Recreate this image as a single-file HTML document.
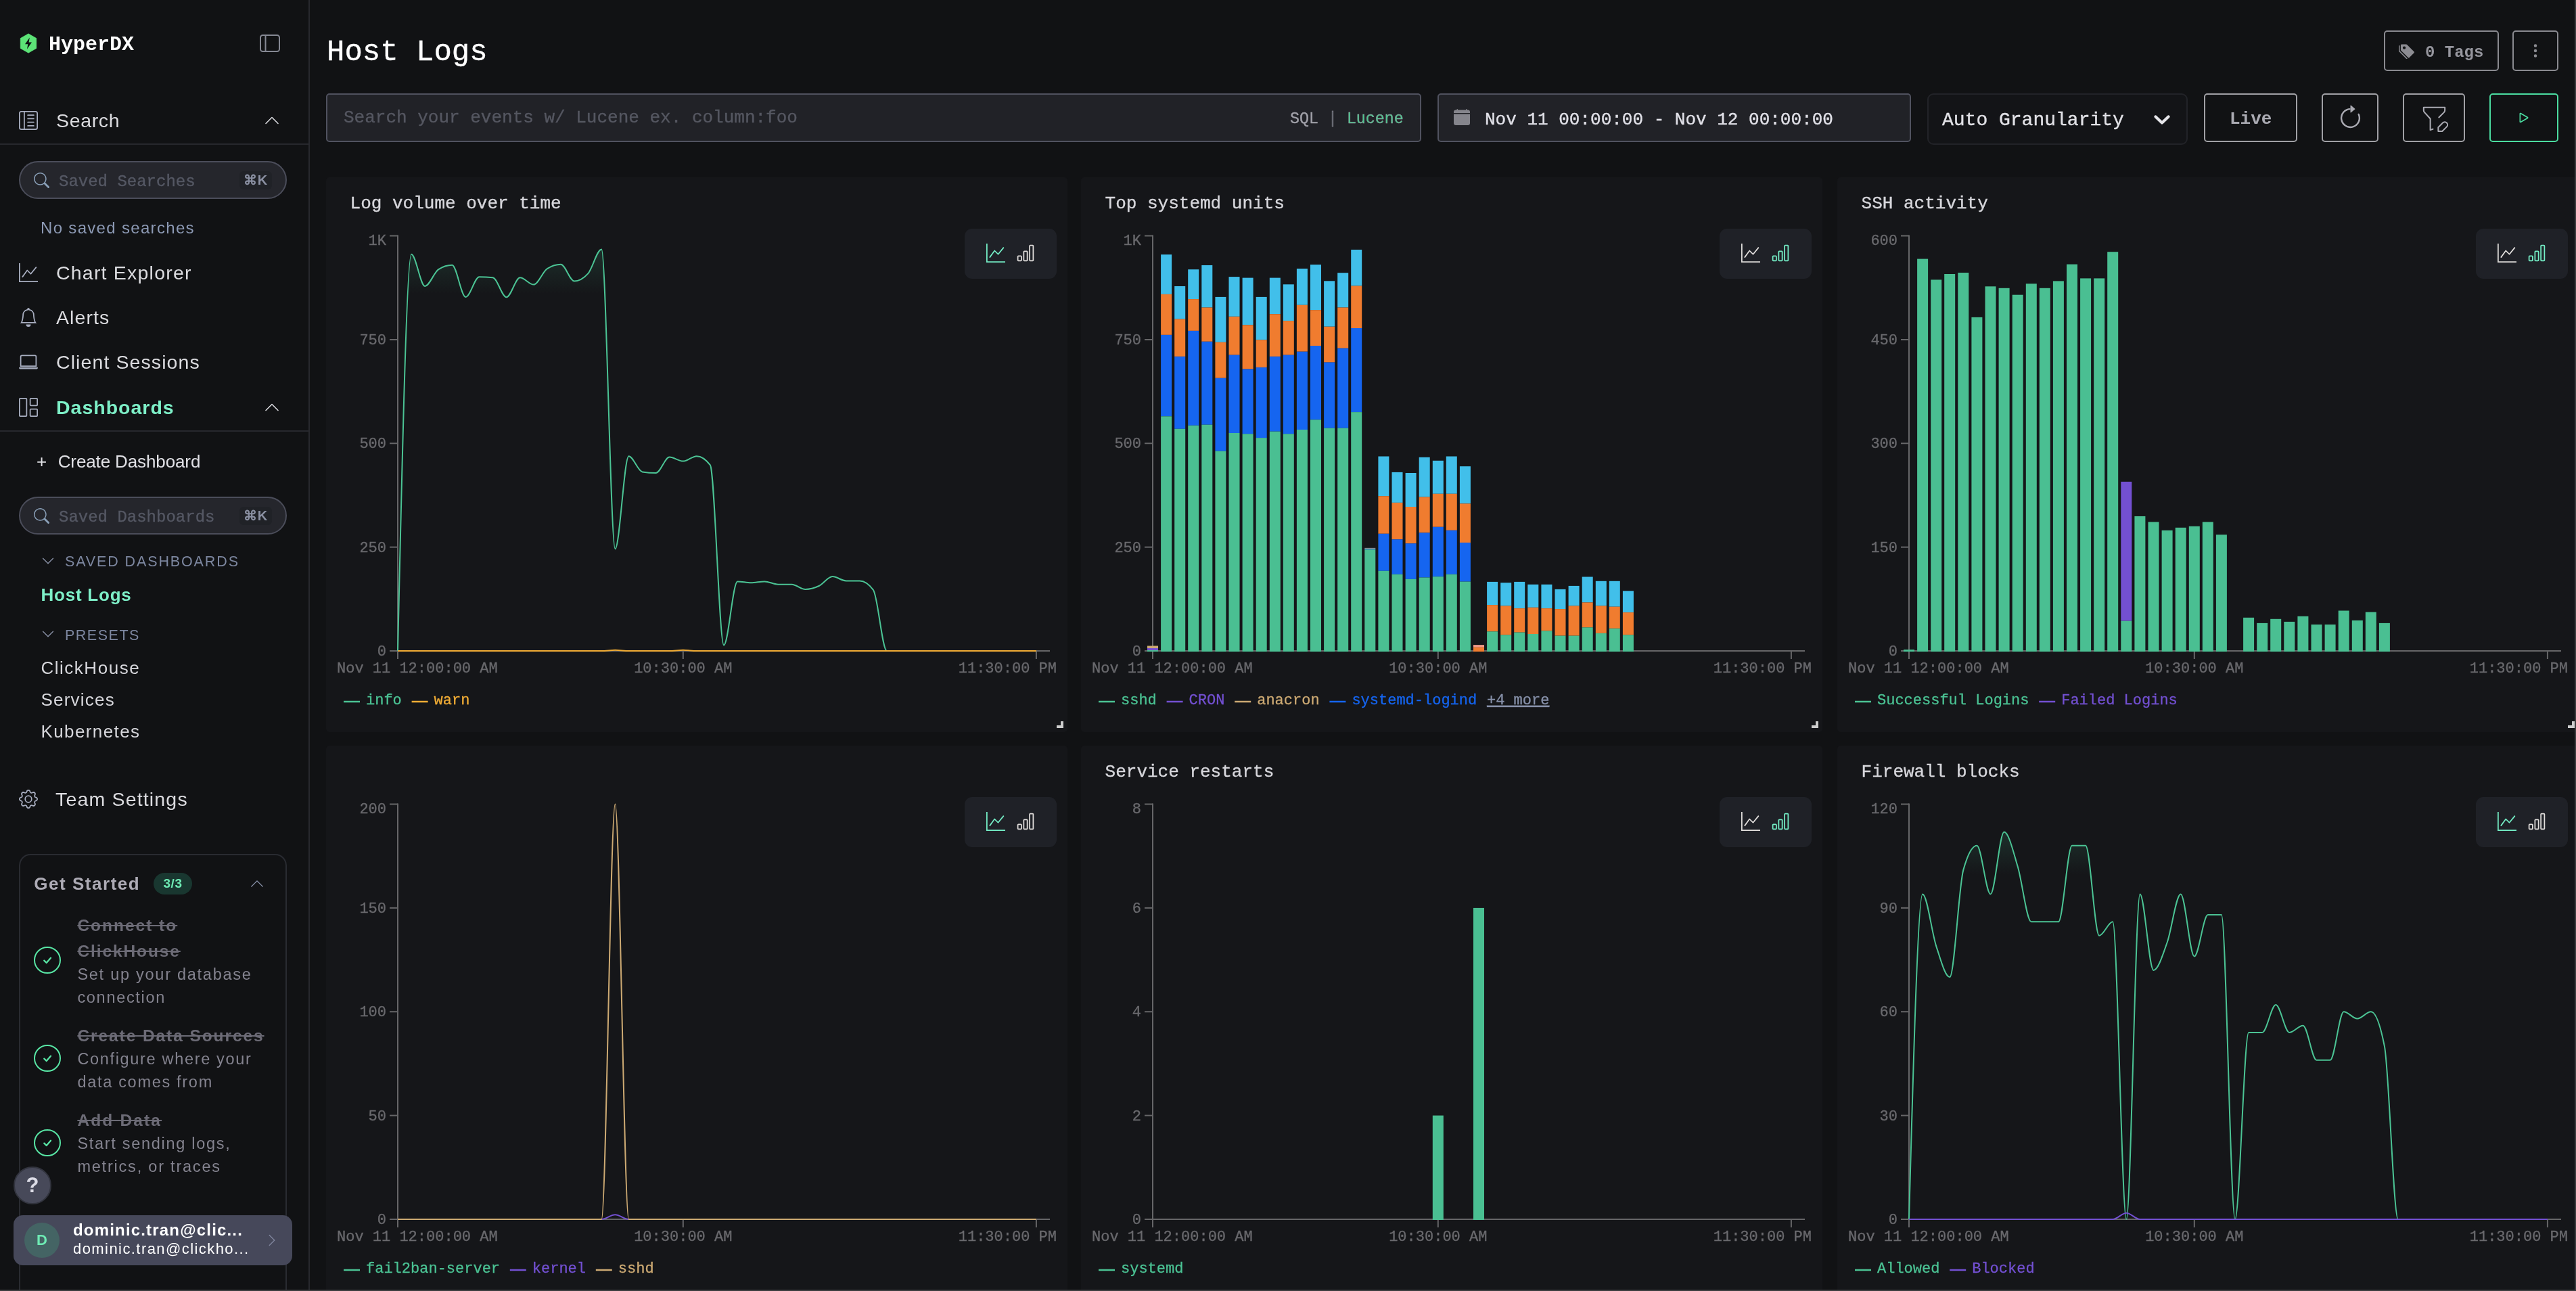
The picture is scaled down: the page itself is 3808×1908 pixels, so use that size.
<!DOCTYPE html>
<html lang="en"><head><meta charset="utf-8"><title>Host Logs - HyperDX</title>
<style>
*{box-sizing:border-box}
html,body{margin:0;padding:0}
body{width:3808px;height:1908px;overflow:hidden;background:#111214;position:relative;font-family:"Liberation Mono", monospace;color:#e1e1e6}
.t{position:absolute;white-space:nowrap}
.ic{position:absolute;display:block;overflow:visible}
.sb{position:absolute;left:0;top:0;width:458px;height:1908px;background:#111214;border-right:2px solid #27282d;font-family:"Liberation Sans", sans-serif}
.hr{position:absolute;left:0;width:456px;height:2px;background:#27282d}
.pill{position:absolute;left:28px;width:396px;height:56px;border:2px solid #4b4d5a;border-radius:28px;background:#25262c}
.kbd{position:absolute;left:324px;top:13px;width:48px;height:27px;border-radius:6px;background:#202227;color:#8a90a2;font:bold 20px/27px "Liberation Sans", sans-serif;text-align:center;letter-spacing:1px}
.card{position:absolute;background:#151619;border-radius:5px;overflow:hidden}
.cs{position:absolute;left:0;top:0}
.tk{font:22px "Liberation Mono", monospace;fill:#69696d;stroke:#69696d;stroke-width:.35px}
.lg{font:22px "Liberation Mono", monospace;stroke-width:.3px}
.tg{position:absolute;right:16px;top:76px;width:136px;height:74px;border-radius:11px;background:#1f2127}
.rh{position:absolute;right:6px;bottom:6px;width:10px;height:10px;border-right:4px solid #cdcdcd;border-bottom:4px solid #cdcdcd}
.btn{position:absolute;border:2px solid #8a8a90;border-radius:5px}
</style></head><body>
<div id="app" style="position:absolute;left:0;top:0;width:3808px;height:1908px;will-change:transform">

<div class="t" style="left:483px;top:49.2px;font:normal 44px/57px 'Liberation Mono', monospace;color:#fff;-webkit-text-stroke:.35px #fff;">Host Logs</div>
<div class="btn" style="left:3524px;top:45px;width:170px;height:60px"></div>
<svg class="ic" style="left:3545.5px;top:63.5px" width="23.5" height="23.5" viewBox="0 0 16 16" fill="#8c8c92" ><path d="M2 2a1 1 0 0 1 1-1h4.586a1 1 0 0 1 .707.293l7 7a1 1 0 0 1 0 1.414l-4.586 4.586a1 1 0 0 1-1.414 0l-7-7A1 1 0 0 1 2 6.586V2zm3.500 4a1.500 1.500 0 1 0 0-3 1.500 1.500 0 0 0 0 3z"/><path d="M1.293 7.793A1 1 0 0 1 1 7.086V2a1 1 0 0 0-1 1v4.586a1 1 0 0 0 .293.707l7 7a1 1 0 0 0 1.414 0l.043-.043-7.457-7.457z"/></svg>
<div class="t" style="left:3585px;top:61.9px;font:bold 24px/31px 'Liberation Mono', monospace;color:#96969e;">0 Tags</div>
<div class="btn" style="left:3714px;top:45px;width:68px;height:60px"></div>
<svg class="ic" style="left:3736px;top:63px" width="24" height="24" viewBox="0 0 16 16" fill="#8c8c92" ><path d="M9.500 13a1.500 1.500 0 1 1-3 0 1.500 1.500 0 0 1 3 0zm0-5a1.500 1.500 0 1 1-3 0 1.500 1.500 0 0 1 3 0zm0-5a1.500 1.500 0 1 1-3 0 1.500 1.500 0 0 1 3 0z"/></svg>
<div style="position:absolute;left:482px;top:138px;width:1619px;height:72px;border:2px solid #50525f;border-radius:5px;background:#212227"></div>
<div class="t" style="left:508px;top:157.3px;font:normal 26px/34px 'Liberation Mono', monospace;color:#555761;-webkit-text-stroke:.35px #555761;">Search your events w/ Lucene ex. column:foo</div>
<div class="t" style="left:1907px;top:161.4px;font:normal 23.3px/30px 'Liberation Mono', monospace;color:#a0a0a8;-webkit-text-stroke:.35px #a0a0a8;">SQL <span style="color:#5a5c66">|</span> <span style="color:#4bc88f">Lucene</span></div>
<div style="position:absolute;left:2125px;top:138px;width:700px;height:72px;border:2px solid #50525f;border-radius:5px;background:#212227"></div>
<svg class="ic" style="left:2148.8px;top:161px" width="24" height="24" viewBox="0 0 16 16" fill="#85858c" ><path d="M3.500 0a.5.5 0 0 1 .5.5V1h8V.5a.5.5 0 0 1 1 0V1h1a2 2 0 0 1 2 2v11a2 2 0 0 1-2 2H2a2 2 0 0 1-2-2V5h16V4H0V3a2 2 0 0 1 2-2h1V.5a.5.5 0 0 1 .5-.5z"/></svg>
<div class="t" style="left:2195px;top:159.7px;font:normal 26px/34px 'Liberation Mono', monospace;color:#e1e1e8;-webkit-text-stroke:.35px #e1e1e8;">Nov 11 00:00:00 - Nov 12 00:00:00</div>
<div style="position:absolute;left:2849px;top:138px;width:385px;height:76px;border:2px solid #222328;border-radius:9px;background:#131417"></div>
<div class="t" style="left:2871px;top:160.2px;font:normal 28px/36px 'Liberation Mono', monospace;color:#e1e1e6;-webkit-text-stroke:.35px #e1e1e6;">Auto Granularity</div>
<svg class="ic" style="left:3182px;top:167px" width="28" height="20" viewBox="0 0 28 20"><path d="M4.500 5.500 L14 14.500 L23.500 5.500" fill="none" stroke="#e6e6ea" stroke-width="4.300" stroke-linecap="round" stroke-linejoin="round"/></svg>
<div class="btn" style="left:3258px;top:138px;width:138px;height:72px;border-color:#a0a0a5"></div>
<div class="t" style="left:3296px;top:159.4px;font:bold 26px/34px 'Liberation Mono', monospace;color:#aaaab2;">Live</div>
<div class="btn" style="left:3432px;top:138px;width:84px;height:72px;border-color:#a0a0a5"></div>
<svg class="ic" style="left:3454.5px;top:154.5px" width="39" height="39" viewBox="0 0 16 16" fill="#aaaab2" ><path fill-rule="evenodd" d="M8 3a5 5 0 1 0 4.546 2.914.5.5 0 0 1 .908-.417A6 6 0 1 1 8 2v1z"/><path d="M8 4.466V.534a.25.25 0 0 1 .41-.192l2.360 1.966c.12.1.12.284 0 .384L8.410 4.658A.25.25 0 0 1 8 4.466z"/></svg>
<div class="btn" style="left:3552px;top:138px;width:92px;height:72px;border-color:#a0a0a5"></div>
<svg class="ic" style="left:3574.5px;top:151px" width="47" height="47" viewBox="0 0 24 24" fill="none" stroke="#aaaab2" stroke-width="1.050" stroke-linecap="round" stroke-linejoin="round"><path d="M10.970 20.344l-1.970 .656v-8.500l-4.480 -4.928a2 2 0 0 1 -.520 -1.345v-2.227h16v2.172a2 2 0 0 1 -.586 1.414l-3.914 3.914"/><path d="M18.420 15.610a2.100 2.100 0 0 1 2.970 2.970l-3.390 3.420h-3v-3l3.420 -3.390z"/></svg>
<div class="btn" style="left:3680px;top:138px;width:102px;height:72px;border-color:#4bdca0"></div>
<svg class="ic" style="left:3717.8px;top:161px" width="26" height="26" viewBox="0 0 16 16" fill="#4bdca0" ><path d="M10.804 8 5 4.633v6.734L10.804 8zm.792-.696a.802.802 0 0 1 0 1.392l-6.363 3.692C4.713 12.690 4 12.345 4 11.692V4.308c0-.653.713-.998 1.233-.696l6.363 3.692z"/></svg>
<div class="card" style="left:482px;top:262px;width:1096px;height:820px"><div class="t" style="left:35.6px;top:22.3px;font:normal 26px/34px 'Liberation Mono', monospace;color:#d7d7dc;-webkit-text-stroke:.35px #d7d7dc;">Log volume over time</div><svg class="cs" width="1116" height="820" viewBox="482 262 1116 820"><defs><linearGradient id="g1" x1="0" y1="0" x2="0" y2="1"><stop offset="0" stop-color="#4bc394" stop-opacity=".15"/><stop offset=".11" stop-color="#4bc394" stop-opacity="0"/></linearGradient></defs><path d="M588,347.5 V974" stroke="#666668" stroke-width="2" fill="none"/><path d="M576,962 H1552" stroke="#666668" stroke-width="2" fill="none"/><text x="571" y="969" text-anchor="end" class="tk">0</text><path d="M576,808.625 H588" stroke="#666668" stroke-width="2"/><text x="571" y="815.625" text-anchor="end" class="tk">250</text><path d="M576,655.25 H588" stroke="#666668" stroke-width="2"/><text x="571" y="662.25" text-anchor="end" class="tk">500</text><path d="M576,501.875 H588" stroke="#666668" stroke-width="2"/><text x="571" y="508.875" text-anchor="end" class="tk">750</text><path d="M576,348.5 H588" stroke="#666668" stroke-width="2"/><text x="571" y="362" text-anchor="end" class="tk">1K</text><path d="M1009.8,962 V974" stroke="#666668" stroke-width="2"/><path d="M1531.9,962 V974" stroke="#666668" stroke-width="2"/><text x="498" y="993.5" class="tk">Nov 11 12:00:00 AM</text><text x="1009.8" y="993.5" text-anchor="middle" class="tk">10:30:00 AM</text><text x="1562" y="993.5" text-anchor="end" class="tk">11:30:00 PM</text><path d="M588.00,962.00C594.69,668.85,601.39,375.70,608.08,375.70C614.78,375.70,621.47,422.90,628.17,422.90C634.86,422.90,641.56,402.30,648.25,398.10C654.94,393.90,661.64,391.80,668.33,391.80C675.03,391.80,681.72,439.00,688.42,439.00C695.11,439.00,701.81,409.20,708.50,409.20C715.19,409.20,721.89,409.57,728.58,410.30C735.28,411.03,741.97,439.20,748.67,439.20C755.36,439.20,762.06,410.30,768.75,410.30C775.44,410.30,782.14,420.60,788.83,420.60C795.53,420.60,802.22,401.30,808.92,397.10C815.61,392.90,822.31,390.80,829.00,390.80C835.69,390.80,842.39,415.50,849.08,415.50C855.78,415.50,862.47,411.80,869.17,404.40C875.86,397.00,882.56,368.40,889.25,368.40C895.94,368.40,902.64,811.20,909.33,811.20C916.03,811.20,922.72,674.20,929.42,674.20C936.11,674.20,942.81,696.33,949.50,697.40C956.19,698.47,962.89,699.00,969.58,699.00C976.28,699.00,982.97,675.60,989.67,675.60C996.36,675.60,1003.06,681.60,1009.75,681.60C1016.44,681.60,1023.14,674.20,1029.83,674.20C1036.53,674.20,1043.22,678.60,1049.92,687.40C1056.61,696.20,1063.31,953.50,1070.00,953.50C1076.69,953.50,1083.39,859.40,1090.08,859.40C1096.78,859.40,1103.47,861.30,1110.17,861.30C1116.86,861.30,1123.56,859.40,1130.25,859.40C1136.94,859.40,1143.64,863.70,1150.33,863.70C1157.03,863.70,1163.72,863.70,1170.42,863.70C1177.11,863.70,1183.81,871.00,1190.50,871.00C1197.19,871.00,1203.89,869.15,1210.58,866.00C1217.28,862.85,1223.97,852.10,1230.67,852.10C1237.36,852.10,1244.06,858.40,1250.75,858.40C1257.44,858.40,1264.14,858.40,1270.83,858.40C1277.53,858.40,1284.22,862.87,1290.92,871.80C1297.61,880.73,1304.31,962.00,1311.00,962.00C1317.69,962.00,1324.39,962.00,1331.08,962.00C1337.78,962.00,1344.47,962.00,1351.17,962.00C1357.86,962.00,1364.56,962.00,1371.25,962.00C1377.94,962.00,1384.64,962.00,1391.33,962.00C1398.03,962.00,1404.72,962.00,1411.42,962.00C1418.11,962.00,1424.81,962.00,1431.50,962.00C1438.19,962.00,1444.89,962.00,1451.58,962.00C1458.28,962.00,1464.97,962.00,1471.67,962.00C1478.36,962.00,1485.06,962.00,1491.75,962.00C1498.44,962.00,1505.14,962.00,1511.83,962.00C1518.53,962.00,1525.22,962.00,1531.92,962.00L1531.92,962L588.00,962Z" fill="url(#g1)" stroke="none"/><path d="M588.00,962.00C594.69,668.85,601.39,375.70,608.08,375.70C614.78,375.70,621.47,422.90,628.17,422.90C634.86,422.90,641.56,402.30,648.25,398.10C654.94,393.90,661.64,391.80,668.33,391.80C675.03,391.80,681.72,439.00,688.42,439.00C695.11,439.00,701.81,409.20,708.50,409.20C715.19,409.20,721.89,409.57,728.58,410.30C735.28,411.03,741.97,439.20,748.67,439.20C755.36,439.20,762.06,410.30,768.75,410.30C775.44,410.30,782.14,420.60,788.83,420.60C795.53,420.60,802.22,401.30,808.92,397.10C815.61,392.90,822.31,390.80,829.00,390.80C835.69,390.80,842.39,415.50,849.08,415.50C855.78,415.50,862.47,411.80,869.17,404.40C875.86,397.00,882.56,368.40,889.25,368.40C895.94,368.40,902.64,811.20,909.33,811.20C916.03,811.20,922.72,674.20,929.42,674.20C936.11,674.20,942.81,696.33,949.50,697.40C956.19,698.47,962.89,699.00,969.58,699.00C976.28,699.00,982.97,675.60,989.67,675.60C996.36,675.60,1003.06,681.60,1009.75,681.60C1016.44,681.60,1023.14,674.20,1029.83,674.20C1036.53,674.20,1043.22,678.60,1049.92,687.40C1056.61,696.20,1063.31,953.50,1070.00,953.50C1076.69,953.50,1083.39,859.40,1090.08,859.40C1096.78,859.40,1103.47,861.30,1110.17,861.30C1116.86,861.30,1123.56,859.40,1130.25,859.40C1136.94,859.40,1143.64,863.70,1150.33,863.70C1157.03,863.70,1163.72,863.70,1170.42,863.70C1177.11,863.70,1183.81,871.00,1190.50,871.00C1197.19,871.00,1203.89,869.15,1210.58,866.00C1217.28,862.85,1223.97,852.10,1230.67,852.10C1237.36,852.10,1244.06,858.40,1250.75,858.40C1257.44,858.40,1264.14,858.40,1270.83,858.40C1277.53,858.40,1284.22,862.87,1290.92,871.80C1297.61,880.73,1304.31,962.00,1311.00,962.00C1317.69,962.00,1324.39,962.00,1331.08,962.00C1337.78,962.00,1344.47,962.00,1351.17,962.00C1357.86,962.00,1364.56,962.00,1371.25,962.00C1377.94,962.00,1384.64,962.00,1391.33,962.00C1398.03,962.00,1404.72,962.00,1411.42,962.00C1418.11,962.00,1424.81,962.00,1431.50,962.00C1438.19,962.00,1444.89,962.00,1451.58,962.00C1458.28,962.00,1464.97,962.00,1471.67,962.00C1478.36,962.00,1485.06,962.00,1491.75,962.00C1498.44,962.00,1505.14,962.00,1511.83,962.00C1518.53,962.00,1525.22,962.00,1531.92,962.00" fill="none" stroke="#4bc394" stroke-width="2"/><path d="M588.00,962.00C594.69,962.00,601.39,962.00,608.08,962.00C614.78,962.00,621.47,962.00,628.17,962.00C634.86,962.00,641.56,962.00,648.25,962.00C654.94,962.00,661.64,962.00,668.33,962.00C675.03,962.00,681.72,962.00,688.42,962.00C695.11,962.00,701.81,962.00,708.50,962.00C715.19,962.00,721.89,962.00,728.58,962.00C735.28,962.00,741.97,962.00,748.67,962.00C755.36,962.00,762.06,962.00,768.75,962.00C775.44,962.00,782.14,962.00,788.83,962.00C795.53,962.00,802.22,962.00,808.92,962.00C815.61,962.00,822.31,962.00,829.00,962.00C835.69,962.00,842.39,962.00,849.08,962.00C855.78,962.00,862.47,962.00,869.17,962.00C875.86,962.00,882.56,962.00,889.25,962.00C895.94,962.00,902.64,960.80,909.33,960.80C916.03,960.80,922.72,962.00,929.42,962.00C936.11,962.00,942.81,962.00,949.50,962.00C956.19,962.00,962.89,962.00,969.58,962.00C976.28,962.00,982.97,962.00,989.67,962.00C996.36,962.00,1003.06,960.80,1009.75,960.80C1016.44,960.80,1023.14,962.00,1029.83,962.00C1036.53,962.00,1043.22,962.00,1049.92,962.00C1056.61,962.00,1063.31,962.00,1070.00,962.00C1076.69,962.00,1083.39,962.00,1090.08,962.00C1096.78,962.00,1103.47,962.00,1110.17,962.00C1116.86,962.00,1123.56,962.00,1130.25,962.00C1136.94,962.00,1143.64,962.00,1150.33,962.00C1157.03,962.00,1163.72,962.00,1170.42,962.00C1177.11,962.00,1183.81,962.00,1190.50,962.00C1197.19,962.00,1203.89,962.00,1210.58,962.00C1217.28,962.00,1223.97,962.00,1230.67,962.00C1237.36,962.00,1244.06,962.00,1250.75,962.00C1257.44,962.00,1264.14,962.00,1270.83,962.00C1277.53,962.00,1284.22,962.00,1290.92,962.00C1297.61,962.00,1304.31,962.00,1311.00,962.00C1317.69,962.00,1324.39,962.00,1331.08,962.00C1337.78,962.00,1344.47,962.00,1351.17,962.00C1357.86,962.00,1364.56,962.00,1371.25,962.00C1377.94,962.00,1384.64,962.00,1391.33,962.00C1398.03,962.00,1404.72,962.00,1411.42,962.00C1418.11,962.00,1424.81,962.00,1431.50,962.00C1438.19,962.00,1444.89,962.00,1451.58,962.00C1458.28,962.00,1464.97,962.00,1471.67,962.00C1478.36,962.00,1485.06,962.00,1491.75,962.00C1498.44,962.00,1505.14,962.00,1511.83,962.00C1518.53,962.00,1525.22,962.00,1531.92,962.00" fill="none" stroke="#f2ad35" stroke-width="2"/><path d="M508,1037 h24" stroke="#4bc394" stroke-width="2.5"/><text x="541" y="1040.8" class="lg" fill="#4bc394" stroke="#4bc394">info</text><path d="M608.6,1037 h24" stroke="#f2ad35" stroke-width="2.5"/><text x="641.6" y="1040.8" class="lg" fill="#f2ad35" stroke="#f2ad35">warn</text></svg><div class="tg"><svg class="ic" style="left:32px;top:22px" width="28" height="28" viewBox="0 0 16 16" fill="#74eec6" ><path fill-rule="evenodd" d="M0 0h1v15h15v1H0V0Zm14.817 3.113a.5.5 0 0 1 .07.704l-4.5 5.5a.5.5 0 0 1-.74.037L7.06 6.767l-3.656 5.027a.5.5 0 0 1-.808-.588l4-5.5a.5.5 0 0 1 .758-.06l2.609 2.61 4.15-5.073a.5.5 0 0 1 .704-.07Z"/></svg><svg class="ic" style="left:76px;top:22px" width="28" height="28" viewBox="0 0 16 16" fill="#e1dedc" ><path d="M4 11H2v3h2v-3zm5-4H7v7h2V7zm5-5v12h-2V2h2zm-2-1a1 1 0 0 0-1 1v12a1 1 0 0 0 1 1h2a1 1 0 0 0 1-1V2a1 1 0 0 0-1-1h-2zM6 7a1 1 0 0 1 1-1h2a1 1 0 0 1 1 1v7a1 1 0 0 1-1 1H7a1 1 0 0 1-1-1V7zm-5 4a1 1 0 0 1 1-1h2a1 1 0 0 1 1 1v3a1 1 0 0 1-1 1H2a1 1 0 0 1-1-1v-3z"/></svg></div><div class="rh"></div></div>
<div class="card" style="left:1598px;top:262px;width:1096px;height:820px"><div class="t" style="left:35.6px;top:22.3px;font:normal 26px/34px 'Liberation Mono', monospace;color:#d7d7dc;-webkit-text-stroke:.35px #d7d7dc;">Top systemd units</div><svg class="cs" width="1116" height="820" viewBox="1598 262 1116 820"><path d="M1704,347.5 V974" stroke="#666668" stroke-width="2" fill="none"/><path d="M1692,962 H2668" stroke="#666668" stroke-width="2" fill="none"/><text x="1687" y="969" text-anchor="end" class="tk">0</text><path d="M1692,808.625 H1704" stroke="#666668" stroke-width="2"/><text x="1687" y="815.625" text-anchor="end" class="tk">250</text><path d="M1692,655.25 H1704" stroke="#666668" stroke-width="2"/><text x="1687" y="662.25" text-anchor="end" class="tk">500</text><path d="M1692,501.875 H1704" stroke="#666668" stroke-width="2"/><text x="1687" y="508.875" text-anchor="end" class="tk">750</text><path d="M1692,348.5 H1704" stroke="#666668" stroke-width="2"/><text x="1687" y="362" text-anchor="end" class="tk">1K</text><path d="M2125.8,962 V974" stroke="#666668" stroke-width="2"/><path d="M2647.9,962 V974" stroke="#666668" stroke-width="2"/><text x="1614" y="993.5" class="tk">Nov 11 12:00:00 AM</text><text x="2125.8" y="993.5" text-anchor="middle" class="tk">10:30:00 AM</text><text x="2678" y="993.5" text-anchor="end" class="tk">11:30:00 PM</text><rect x="1696.0" y="954.5" width="16" height="3.5" fill="#cdaa73"/><rect x="1696.0" y="958.0" width="16" height="3.0" fill="#7350d2"/><rect x="1696.0" y="961.0" width="16" height="2.0" fill="#4abf92"/><rect x="1716.1" y="376.2" width="16" height="58.7" fill="#41bfea"/><rect x="1716.1" y="434.9" width="16" height="60.0" fill="#f07c2f"/><rect x="1716.1" y="494.9" width="16" height="120.4" fill="#1565f0"/><rect x="1716.1" y="615.3" width="16" height="347.7" fill="#4abf92"/><rect x="1736.2" y="423.0" width="16" height="48.6" fill="#41bfea"/><rect x="1736.2" y="471.6" width="16" height="55.3" fill="#f07c2f"/><rect x="1736.2" y="526.9" width="16" height="106.9" fill="#1565f0"/><rect x="1736.2" y="633.8" width="16" height="329.2" fill="#4abf92"/><rect x="1756.2" y="398.2" width="16" height="43.9" fill="#41bfea"/><rect x="1756.2" y="442.1" width="16" height="46.8" fill="#f07c2f"/><rect x="1756.2" y="488.9" width="16" height="139.9" fill="#1565f0"/><rect x="1756.2" y="628.8" width="16" height="334.2" fill="#4abf92"/><rect x="1776.3" y="392.0" width="16" height="62.5" fill="#41bfea"/><rect x="1776.3" y="454.5" width="16" height="50.3" fill="#f07c2f"/><rect x="1776.3" y="504.8" width="16" height="122.9" fill="#1565f0"/><rect x="1776.3" y="627.7" width="16" height="335.3" fill="#4abf92"/><rect x="1796.4" y="438.9" width="16" height="66.9" fill="#41bfea"/><rect x="1796.4" y="505.8" width="16" height="53.0" fill="#f07c2f"/><rect x="1796.4" y="558.8" width="16" height="108.0" fill="#1565f0"/><rect x="1796.4" y="666.8" width="16" height="296.2" fill="#4abf92"/><rect x="1816.5" y="409.1" width="16" height="58.7" fill="#41bfea"/><rect x="1816.5" y="467.9" width="16" height="56.8" fill="#f07c2f"/><rect x="1816.5" y="524.6" width="16" height="115.4" fill="#1565f0"/><rect x="1816.5" y="640.0" width="16" height="323.0" fill="#4abf92"/><rect x="1836.6" y="410.6" width="16" height="69.6" fill="#41bfea"/><rect x="1836.6" y="480.3" width="16" height="65.2" fill="#f07c2f"/><rect x="1836.6" y="545.5" width="16" height="95.7" fill="#1565f0"/><rect x="1836.6" y="641.2" width="16" height="321.8" fill="#4abf92"/><rect x="1856.7" y="438.9" width="16" height="63.4" fill="#41bfea"/><rect x="1856.7" y="502.3" width="16" height="40.6" fill="#f07c2f"/><rect x="1856.7" y="543.0" width="16" height="104.1" fill="#1565f0"/><rect x="1856.7" y="647.1" width="16" height="315.9" fill="#4abf92"/><rect x="1876.8" y="410.6" width="16" height="53.5" fill="#41bfea"/><rect x="1876.8" y="464.2" width="16" height="62.7" fill="#f07c2f"/><rect x="1876.8" y="526.9" width="16" height="110.8" fill="#1565f0"/><rect x="1876.8" y="637.7" width="16" height="325.3" fill="#4abf92"/><rect x="1896.8" y="420.3" width="16" height="53.8" fill="#41bfea"/><rect x="1896.8" y="474.1" width="16" height="50.6" fill="#f07c2f"/><rect x="1896.8" y="524.6" width="16" height="116.6" fill="#1565f0"/><rect x="1896.8" y="641.2" width="16" height="321.8" fill="#4abf92"/><rect x="1916.9" y="397.0" width="16" height="53.8" fill="#41bfea"/><rect x="1916.9" y="450.8" width="16" height="68.9" fill="#f07c2f"/><rect x="1916.9" y="519.7" width="16" height="115.3" fill="#1565f0"/><rect x="1916.9" y="635.0" width="16" height="328.0" fill="#4abf92"/><rect x="1937.0" y="391.1" width="16" height="67.2" fill="#41bfea"/><rect x="1937.0" y="458.2" width="16" height="52.8" fill="#f07c2f"/><rect x="1937.0" y="511.0" width="16" height="109.3" fill="#1565f0"/><rect x="1937.0" y="620.3" width="16" height="342.7" fill="#4abf92"/><rect x="1957.1" y="415.3" width="16" height="67.4" fill="#41bfea"/><rect x="1957.1" y="482.8" width="16" height="52.8" fill="#f07c2f"/><rect x="1957.1" y="535.5" width="16" height="97.2" fill="#1565f0"/><rect x="1957.1" y="632.7" width="16" height="330.3" fill="#4abf92"/><rect x="1977.2" y="403.2" width="16" height="51.3" fill="#41bfea"/><rect x="1977.2" y="454.5" width="16" height="60.2" fill="#f07c2f"/><rect x="1977.2" y="514.7" width="16" height="118.0" fill="#1565f0"/><rect x="1977.2" y="632.7" width="16" height="330.3" fill="#4abf92"/><rect x="1997.2" y="369.0" width="16" height="53.5" fill="#41bfea"/><rect x="1997.2" y="422.5" width="16" height="62.5" fill="#f07c2f"/><rect x="1997.2" y="485.0" width="16" height="124.1" fill="#1565f0"/><rect x="1997.2" y="609.1" width="16" height="353.9" fill="#4abf92"/><rect x="2017.3" y="809.8" width="16" height="1.6" fill="#848c94"/><rect x="2017.3" y="811.4" width="16" height="1.3" fill="#41bfea"/><rect x="2017.3" y="812.7" width="16" height="150.3" fill="#4abf92"/><rect x="2037.4" y="674.5" width="16" height="58.7" fill="#41bfea"/><rect x="2037.4" y="733.2" width="16" height="55.6" fill="#f07c2f"/><rect x="2037.4" y="788.8" width="16" height="55.0" fill="#1565f0"/><rect x="2037.4" y="843.8" width="16" height="119.2" fill="#4abf92"/><rect x="2057.5" y="697.9" width="16" height="45.0" fill="#41bfea"/><rect x="2057.5" y="742.9" width="16" height="54.2" fill="#f07c2f"/><rect x="2057.5" y="797.2" width="16" height="51.6" fill="#1565f0"/><rect x="2057.5" y="848.8" width="16" height="114.2" fill="#4abf92"/><rect x="2077.6" y="699.0" width="16" height="50.0" fill="#41bfea"/><rect x="2077.6" y="749.0" width="16" height="54.2" fill="#f07c2f"/><rect x="2077.6" y="803.2" width="16" height="52.7" fill="#1565f0"/><rect x="2077.6" y="855.9" width="16" height="107.1" fill="#4abf92"/><rect x="2097.7" y="675.8" width="16" height="58.7" fill="#41bfea"/><rect x="2097.7" y="734.5" width="16" height="52.9" fill="#f07c2f"/><rect x="2097.7" y="787.4" width="16" height="66.1" fill="#1565f0"/><rect x="2097.7" y="853.5" width="16" height="109.5" fill="#4abf92"/><rect x="2117.8" y="680.8" width="16" height="49.0" fill="#41bfea"/><rect x="2117.8" y="729.8" width="16" height="49.0" fill="#f07c2f"/><rect x="2117.8" y="778.8" width="16" height="73.5" fill="#1565f0"/><rect x="2117.8" y="852.2" width="16" height="110.8" fill="#4abf92"/><rect x="2137.8" y="674.5" width="16" height="55.3" fill="#41bfea"/><rect x="2137.8" y="729.8" width="16" height="54.0" fill="#f07c2f"/><rect x="2137.8" y="783.8" width="16" height="65.0" fill="#1565f0"/><rect x="2137.8" y="848.8" width="16" height="114.2" fill="#4abf92"/><rect x="2157.9" y="689.2" width="16" height="55.0" fill="#41bfea"/><rect x="2157.9" y="744.3" width="16" height="57.7" fill="#f07c2f"/><rect x="2157.9" y="801.9" width="16" height="57.7" fill="#1565f0"/><rect x="2157.9" y="859.6" width="16" height="103.4" fill="#4abf92"/><rect x="2178.0" y="953.1" width="16" height="3.7" fill="#f09887"/><rect x="2178.0" y="956.7" width="16" height="6.3" fill="#f07c2f"/><rect x="2198.1" y="859.9" width="16" height="34.2" fill="#41bfea"/><rect x="2198.1" y="894.1" width="16" height="39.2" fill="#f07c2f"/><rect x="2198.1" y="933.3" width="16" height="29.7" fill="#4abf92"/><rect x="2218.2" y="861.2" width="16" height="34.2" fill="#41bfea"/><rect x="2218.2" y="895.4" width="16" height="42.9" fill="#f07c2f"/><rect x="2218.2" y="938.3" width="16" height="24.7" fill="#4abf92"/><rect x="2238.2" y="859.9" width="16" height="39.2" fill="#41bfea"/><rect x="2238.2" y="899.1" width="16" height="35.5" fill="#f07c2f"/><rect x="2238.2" y="934.6" width="16" height="28.4" fill="#4abf92"/><rect x="2258.3" y="863.8" width="16" height="34.0" fill="#41bfea"/><rect x="2258.3" y="897.8" width="16" height="39.2" fill="#f07c2f"/><rect x="2258.3" y="937.0" width="16" height="26.0" fill="#4abf92"/><rect x="2278.4" y="863.8" width="16" height="35.3" fill="#41bfea"/><rect x="2278.4" y="899.1" width="16" height="33.2" fill="#f07c2f"/><rect x="2278.4" y="932.3" width="16" height="30.7" fill="#4abf92"/><rect x="2298.5" y="870.9" width="16" height="29.2" fill="#41bfea"/><rect x="2298.5" y="900.1" width="16" height="39.5" fill="#f07c2f"/><rect x="2298.5" y="939.6" width="16" height="23.4" fill="#4abf92"/><rect x="2318.6" y="865.9" width="16" height="29.5" fill="#41bfea"/><rect x="2318.6" y="895.4" width="16" height="44.2" fill="#f07c2f"/><rect x="2318.6" y="939.6" width="16" height="23.4" fill="#4abf92"/><rect x="2338.7" y="852.5" width="16" height="37.9" fill="#41bfea"/><rect x="2338.7" y="890.4" width="16" height="36.9" fill="#f07c2f"/><rect x="2338.7" y="927.3" width="16" height="35.7" fill="#4abf92"/><rect x="2358.8" y="858.8" width="16" height="36.6" fill="#41bfea"/><rect x="2358.8" y="895.4" width="16" height="40.5" fill="#f07c2f"/><rect x="2358.8" y="935.9" width="16" height="27.1" fill="#4abf92"/><rect x="2378.8" y="858.8" width="16" height="37.9" fill="#41bfea"/><rect x="2378.8" y="896.7" width="16" height="32.1" fill="#f07c2f"/><rect x="2378.8" y="928.8" width="16" height="34.2" fill="#4abf92"/><rect x="2398.9" y="873.3" width="16" height="31.9" fill="#41bfea"/><rect x="2398.9" y="905.1" width="16" height="33.2" fill="#f07c2f"/><rect x="2398.9" y="938.3" width="16" height="24.7" fill="#4abf92"/><path d="M1624,1037 h24" stroke="#4bc394" stroke-width="2.5"/><text x="1657" y="1040.8" class="lg" fill="#4bc394" stroke="#4bc394">sshd</text><path d="M1724.6,1037 h24" stroke="#7350d2" stroke-width="2.5"/><text x="1757.6" y="1040.8" class="lg" fill="#7350d2" stroke="#7350d2">CRON</text><path d="M1825.2,1037 h24" stroke="#cdaa73" stroke-width="2.5"/><text x="1858.2" y="1040.8" class="lg" fill="#cdaa73" stroke="#cdaa73">anacron</text><path d="M1965.4,1037 h24" stroke="#1565f0" stroke-width="2.5"/><text x="1998.4" y="1040.8" class="lg" fill="#1565f0" stroke="#1565f0">systemd-logind</text><text x="2198" y="1040.8" class="lg" fill="#8791aa" stroke="#8791aa" text-decoration="underline">+4 more</text></svg><div class="tg"><svg class="ic" style="left:32px;top:22px" width="28" height="28" viewBox="0 0 16 16" fill="#e1dedc" ><path fill-rule="evenodd" d="M0 0h1v15h15v1H0V0Zm14.817 3.113a.5.5 0 0 1 .07.704l-4.5 5.5a.5.5 0 0 1-.74.037L7.06 6.767l-3.656 5.027a.5.5 0 0 1-.808-.588l4-5.5a.5.5 0 0 1 .758-.06l2.609 2.61 4.15-5.073a.5.5 0 0 1 .704-.07Z"/></svg><svg class="ic" style="left:76px;top:22px" width="28" height="28" viewBox="0 0 16 16" fill="#74eec6" ><path d="M4 11H2v3h2v-3zm5-4H7v7h2V7zm5-5v12h-2V2h2zm-2-1a1 1 0 0 0-1 1v12a1 1 0 0 0 1 1h2a1 1 0 0 0 1-1V2a1 1 0 0 0-1-1h-2zM6 7a1 1 0 0 1 1-1h2a1 1 0 0 1 1 1v7a1 1 0 0 1-1 1H7a1 1 0 0 1-1-1V7zm-5 4a1 1 0 0 1 1-1h2a1 1 0 0 1 1 1v3a1 1 0 0 1-1 1H2a1 1 0 0 1-1-1v-3z"/></svg></div><div class="rh"></div></div>
<div class="card" style="left:2716px;top:262px;width:1096px;height:820px"><div class="t" style="left:35.6px;top:22.3px;font:normal 26px/34px 'Liberation Mono', monospace;color:#d7d7dc;-webkit-text-stroke:.35px #d7d7dc;">SSH activity</div><svg class="cs" width="1116" height="820" viewBox="2716 262 1116 820"><path d="M2822,347.5 V974" stroke="#666668" stroke-width="2" fill="none"/><path d="M2810,962 H3786" stroke="#666668" stroke-width="2" fill="none"/><text x="2805" y="969" text-anchor="end" class="tk">0</text><path d="M2810,808.625 H2822" stroke="#666668" stroke-width="2"/><text x="2805" y="815.625" text-anchor="end" class="tk">150</text><path d="M2810,655.25 H2822" stroke="#666668" stroke-width="2"/><text x="2805" y="662.25" text-anchor="end" class="tk">300</text><path d="M2810,501.875 H2822" stroke="#666668" stroke-width="2"/><text x="2805" y="508.875" text-anchor="end" class="tk">450</text><path d="M2810,348.5 H2822" stroke="#666668" stroke-width="2"/><text x="2805" y="362" text-anchor="end" class="tk">600</text><path d="M3243.8,962 V974" stroke="#666668" stroke-width="2"/><path d="M3765.9,962 V974" stroke="#666668" stroke-width="2"/><text x="2732" y="993.5" class="tk">Nov 11 12:00:00 AM</text><text x="3243.8" y="993.5" text-anchor="middle" class="tk">10:30:00 AM</text><text x="3796" y="993.5" text-anchor="end" class="tk">11:30:00 PM</text><rect x="2814.0" y="960.0" width="16" height="3.0" fill="#4abf92"/><rect x="2834.1" y="382.6" width="16" height="580.4" fill="#4abf92"/><rect x="2854.2" y="413.4" width="16" height="549.6" fill="#4abf92"/><rect x="2874.2" y="405.0" width="16" height="558.0" fill="#4abf92"/><rect x="2894.3" y="403.0" width="16" height="560.0" fill="#4abf92"/><rect x="2914.4" y="468.9" width="16" height="494.1" fill="#4abf92"/><rect x="2934.5" y="423.3" width="16" height="539.7" fill="#4abf92"/><rect x="2954.6" y="425.8" width="16" height="537.2" fill="#4abf92"/><rect x="2974.7" y="435.7" width="16" height="527.3" fill="#4abf92"/><rect x="2994.8" y="419.3" width="16" height="543.7" fill="#4abf92"/><rect x="3014.8" y="425.8" width="16" height="537.2" fill="#4abf92"/><rect x="3034.9" y="415.4" width="16" height="547.6" fill="#4abf92"/><rect x="3055.0" y="390.6" width="16" height="572.4" fill="#4abf92"/><rect x="3075.1" y="411.4" width="16" height="551.6" fill="#4abf92"/><rect x="3095.2" y="411.4" width="16" height="551.6" fill="#4abf92"/><rect x="3115.2" y="372.2" width="16" height="590.8" fill="#4abf92"/><rect x="3155.4" y="763.0" width="16" height="200.0" fill="#4abf92"/><rect x="3175.5" y="771.4" width="16" height="191.6" fill="#4abf92"/><rect x="3195.6" y="783.8" width="16" height="179.2" fill="#4abf92"/><rect x="3215.7" y="779.8" width="16" height="183.2" fill="#4abf92"/><rect x="3235.8" y="777.8" width="16" height="185.2" fill="#4abf92"/><rect x="3255.8" y="771.4" width="16" height="191.6" fill="#4abf92"/><rect x="3275.9" y="790.2" width="16" height="172.8" fill="#4abf92"/><rect x="3316.1" y="912.8" width="16" height="50.2" fill="#4abf92"/><rect x="3336.2" y="920.9" width="16" height="42.1" fill="#4abf92"/><rect x="3356.2" y="914.8" width="16" height="48.2" fill="#4abf92"/><rect x="3376.3" y="918.9" width="16" height="44.1" fill="#4abf92"/><rect x="3396.4" y="910.8" width="16" height="52.2" fill="#4abf92"/><rect x="3416.5" y="923.0" width="16" height="40.0" fill="#4abf92"/><rect x="3436.6" y="923.0" width="16" height="40.0" fill="#4abf92"/><rect x="3456.7" y="902.5" width="16" height="60.5" fill="#4abf92"/><rect x="3476.8" y="916.9" width="16" height="46.1" fill="#4abf92"/><rect x="3496.8" y="904.6" width="16" height="58.4" fill="#4abf92"/><rect x="3516.9" y="920.9" width="16" height="42.1" fill="#4abf92"/><rect x="3135.3" y="711.9" width="16" height="205.8" fill="#7350d2"/><rect x="3135.3" y="917.7" width="16" height="45.3" fill="#4abf92"/><path d="M2742,1037 h24" stroke="#4bc394" stroke-width="2.5"/><text x="2775" y="1040.8" class="lg" fill="#4bc394" stroke="#4bc394">Successful Logins</text><path d="M3014.2,1037 h24" stroke="#7350d2" stroke-width="2.5"/><text x="3047.2" y="1040.8" class="lg" fill="#7350d2" stroke="#7350d2">Failed Logins</text></svg><div class="tg"><svg class="ic" style="left:32px;top:22px" width="28" height="28" viewBox="0 0 16 16" fill="#e1dedc" ><path fill-rule="evenodd" d="M0 0h1v15h15v1H0V0Zm14.817 3.113a.5.5 0 0 1 .07.704l-4.5 5.5a.5.5 0 0 1-.74.037L7.06 6.767l-3.656 5.027a.5.5 0 0 1-.808-.588l4-5.5a.5.5 0 0 1 .758-.06l2.609 2.61 4.15-5.073a.5.5 0 0 1 .704-.07Z"/></svg><svg class="ic" style="left:76px;top:22px" width="28" height="28" viewBox="0 0 16 16" fill="#74eec6" ><path d="M4 11H2v3h2v-3zm5-4H7v7h2V7zm5-5v12h-2V2h2zm-2-1a1 1 0 0 0-1 1v12a1 1 0 0 0 1 1h2a1 1 0 0 0 1-1V2a1 1 0 0 0-1-1h-2zM6 7a1 1 0 0 1 1-1h2a1 1 0 0 1 1 1v7a1 1 0 0 1-1 1H7a1 1 0 0 1-1-1V7zm-5 4a1 1 0 0 1 1-1h2a1 1 0 0 1 1 1v3a1 1 0 0 1-1 1H2a1 1 0 0 1-1-1v-3z"/></svg></div><div class="rh"></div></div>
<div class="card" style="left:482px;top:1102px;width:1096px;height:820px"><svg class="cs" width="1116" height="820" viewBox="482 1102 1116 820"><path d="M588,1187.5 V1814" stroke="#666668" stroke-width="2" fill="none"/><path d="M576,1802 H1552" stroke="#666668" stroke-width="2" fill="none"/><text x="571" y="1809" text-anchor="end" class="tk">0</text><path d="M576,1648.62 H588" stroke="#666668" stroke-width="2"/><text x="571" y="1655.62" text-anchor="end" class="tk">50</text><path d="M576,1495.25 H588" stroke="#666668" stroke-width="2"/><text x="571" y="1502.25" text-anchor="end" class="tk">100</text><path d="M576,1341.88 H588" stroke="#666668" stroke-width="2"/><text x="571" y="1348.88" text-anchor="end" class="tk">150</text><path d="M576,1188.5 H588" stroke="#666668" stroke-width="2"/><text x="571" y="1202" text-anchor="end" class="tk">200</text><path d="M1009.8,1802 V1814" stroke="#666668" stroke-width="2"/><path d="M1531.9,1802 V1814" stroke="#666668" stroke-width="2"/><text x="498" y="1833.5" class="tk">Nov 11 12:00:00 AM</text><text x="1009.8" y="1833.5" text-anchor="middle" class="tk">10:30:00 AM</text><text x="1562" y="1833.5" text-anchor="end" class="tk">11:30:00 PM</text><path d="M588.00,1802.00C594.69,1802.00,601.39,1802.00,608.08,1802.00C614.78,1802.00,621.47,1802.00,628.17,1802.00C634.86,1802.00,641.56,1802.00,648.25,1802.00C654.94,1802.00,661.64,1802.00,668.33,1802.00C675.03,1802.00,681.72,1802.00,688.42,1802.00C695.11,1802.00,701.81,1802.00,708.50,1802.00C715.19,1802.00,721.89,1802.00,728.58,1802.00C735.28,1802.00,741.97,1802.00,748.67,1802.00C755.36,1802.00,762.06,1802.00,768.75,1802.00C775.44,1802.00,782.14,1802.00,788.83,1802.00C795.53,1802.00,802.22,1802.00,808.92,1802.00C815.61,1802.00,822.31,1802.00,829.00,1802.00C835.69,1802.00,842.39,1802.00,849.08,1802.00C855.78,1802.00,862.47,1802.00,869.17,1802.00C875.86,1802.00,882.56,1802.00,889.25,1802.00C895.94,1802.00,902.64,1795.25,909.33,1795.25C916.03,1795.25,922.72,1802.00,929.42,1802.00C936.11,1802.00,942.81,1802.00,949.50,1802.00C956.19,1802.00,962.89,1802.00,969.58,1802.00C976.28,1802.00,982.97,1802.00,989.67,1802.00C996.36,1802.00,1003.06,1802.00,1009.75,1802.00C1016.44,1802.00,1023.14,1802.00,1029.83,1802.00C1036.53,1802.00,1043.22,1802.00,1049.92,1802.00C1056.61,1802.00,1063.31,1802.00,1070.00,1802.00C1076.69,1802.00,1083.39,1802.00,1090.08,1802.00C1096.78,1802.00,1103.47,1802.00,1110.17,1802.00C1116.86,1802.00,1123.56,1802.00,1130.25,1802.00C1136.94,1802.00,1143.64,1802.00,1150.33,1802.00C1157.03,1802.00,1163.72,1802.00,1170.42,1802.00C1177.11,1802.00,1183.81,1802.00,1190.50,1802.00C1197.19,1802.00,1203.89,1802.00,1210.58,1802.00C1217.28,1802.00,1223.97,1802.00,1230.67,1802.00C1237.36,1802.00,1244.06,1802.00,1250.75,1802.00C1257.44,1802.00,1264.14,1802.00,1270.83,1802.00C1277.53,1802.00,1284.22,1802.00,1290.92,1802.00C1297.61,1802.00,1304.31,1802.00,1311.00,1802.00C1317.69,1802.00,1324.39,1802.00,1331.08,1802.00C1337.78,1802.00,1344.47,1802.00,1351.17,1802.00C1357.86,1802.00,1364.56,1802.00,1371.25,1802.00C1377.94,1802.00,1384.64,1802.00,1391.33,1802.00C1398.03,1802.00,1404.72,1802.00,1411.42,1802.00C1418.11,1802.00,1424.81,1802.00,1431.50,1802.00C1438.19,1802.00,1444.89,1802.00,1451.58,1802.00C1458.28,1802.00,1464.97,1802.00,1471.67,1802.00C1478.36,1802.00,1485.06,1802.00,1491.75,1802.00C1498.44,1802.00,1505.14,1802.00,1511.83,1802.00C1518.53,1802.00,1525.22,1802.00,1531.92,1802.00" fill="none" stroke="#7350d2" stroke-width="2"/><path d="M588.00,1802.00C594.69,1802.00,601.39,1802.00,608.08,1802.00C614.78,1802.00,621.47,1802.00,628.17,1802.00C634.86,1802.00,641.56,1802.00,648.25,1802.00C654.94,1802.00,661.64,1802.00,668.33,1802.00C675.03,1802.00,681.72,1802.00,688.42,1802.00C695.11,1802.00,701.81,1802.00,708.50,1802.00C715.19,1802.00,721.89,1802.00,728.58,1802.00C735.28,1802.00,741.97,1802.00,748.67,1802.00C755.36,1802.00,762.06,1802.00,768.75,1802.00C775.44,1802.00,782.14,1802.00,788.83,1802.00C795.53,1802.00,802.22,1802.00,808.92,1802.00C815.61,1802.00,822.31,1802.00,829.00,1802.00C835.69,1802.00,842.39,1802.00,849.08,1802.00C855.78,1802.00,862.47,1802.00,869.17,1802.00C875.86,1802.00,882.56,1802.00,889.25,1802.00C895.94,1802.00,902.64,1188.50,909.33,1188.50C916.03,1188.50,922.72,1802.00,929.42,1802.00C936.11,1802.00,942.81,1802.00,949.50,1802.00C956.19,1802.00,962.89,1802.00,969.58,1802.00C976.28,1802.00,982.97,1802.00,989.67,1802.00C996.36,1802.00,1003.06,1802.00,1009.75,1802.00C1016.44,1802.00,1023.14,1802.00,1029.83,1802.00C1036.53,1802.00,1043.22,1802.00,1049.92,1802.00C1056.61,1802.00,1063.31,1802.00,1070.00,1802.00C1076.69,1802.00,1083.39,1802.00,1090.08,1802.00C1096.78,1802.00,1103.47,1802.00,1110.17,1802.00C1116.86,1802.00,1123.56,1802.00,1130.25,1802.00C1136.94,1802.00,1143.64,1802.00,1150.33,1802.00C1157.03,1802.00,1163.72,1802.00,1170.42,1802.00C1177.11,1802.00,1183.81,1802.00,1190.50,1802.00C1197.19,1802.00,1203.89,1802.00,1210.58,1802.00C1217.28,1802.00,1223.97,1802.00,1230.67,1802.00C1237.36,1802.00,1244.06,1802.00,1250.75,1802.00C1257.44,1802.00,1264.14,1802.00,1270.83,1802.00C1277.53,1802.00,1284.22,1802.00,1290.92,1802.00C1297.61,1802.00,1304.31,1802.00,1311.00,1802.00C1317.69,1802.00,1324.39,1802.00,1331.08,1802.00C1337.78,1802.00,1344.47,1802.00,1351.17,1802.00C1357.86,1802.00,1364.56,1802.00,1371.25,1802.00C1377.94,1802.00,1384.64,1802.00,1391.33,1802.00C1398.03,1802.00,1404.72,1802.00,1411.42,1802.00C1418.11,1802.00,1424.81,1802.00,1431.50,1802.00C1438.19,1802.00,1444.89,1802.00,1451.58,1802.00C1458.28,1802.00,1464.97,1802.00,1471.67,1802.00C1478.36,1802.00,1485.06,1802.00,1491.75,1802.00C1498.44,1802.00,1505.14,1802.00,1511.83,1802.00C1518.53,1802.00,1525.22,1802.00,1531.92,1802.00" fill="none" stroke="#cdaa73" stroke-width="2"/><path d="M508,1877 h24" stroke="#4bc394" stroke-width="2.5"/><text x="541" y="1880.8" class="lg" fill="#4bc394" stroke="#4bc394">fail2ban-server</text><path d="M753.8,1877 h24" stroke="#7350d2" stroke-width="2.5"/><text x="786.8" y="1880.8" class="lg" fill="#7350d2" stroke="#7350d2">kernel</text><path d="M880.8,1877 h24" stroke="#cdaa73" stroke-width="2.5"/><text x="913.8" y="1880.8" class="lg" fill="#cdaa73" stroke="#cdaa73">sshd</text></svg><div class="tg"><svg class="ic" style="left:32px;top:22px" width="28" height="28" viewBox="0 0 16 16" fill="#74eec6" ><path fill-rule="evenodd" d="M0 0h1v15h15v1H0V0Zm14.817 3.113a.5.5 0 0 1 .07.704l-4.5 5.5a.5.5 0 0 1-.74.037L7.06 6.767l-3.656 5.027a.5.5 0 0 1-.808-.588l4-5.5a.5.5 0 0 1 .758-.06l2.609 2.61 4.15-5.073a.5.5 0 0 1 .704-.07Z"/></svg><svg class="ic" style="left:76px;top:22px" width="28" height="28" viewBox="0 0 16 16" fill="#e1dedc" ><path d="M4 11H2v3h2v-3zm5-4H7v7h2V7zm5-5v12h-2V2h2zm-2-1a1 1 0 0 0-1 1v12a1 1 0 0 0 1 1h2a1 1 0 0 0 1-1V2a1 1 0 0 0-1-1h-2zM6 7a1 1 0 0 1 1-1h2a1 1 0 0 1 1 1v7a1 1 0 0 1-1 1H7a1 1 0 0 1-1-1V7zm-5 4a1 1 0 0 1 1-1h2a1 1 0 0 1 1 1v3a1 1 0 0 1-1 1H2a1 1 0 0 1-1-1v-3z"/></svg></div><div class="rh"></div></div>
<div class="card" style="left:1598px;top:1102px;width:1096px;height:820px"><div class="t" style="left:35.6px;top:22.3px;font:normal 26px/34px 'Liberation Mono', monospace;color:#d7d7dc;-webkit-text-stroke:.35px #d7d7dc;">Service restarts</div><svg class="cs" width="1116" height="820" viewBox="1598 1102 1116 820"><path d="M1704,1187.5 V1814" stroke="#666668" stroke-width="2" fill="none"/><path d="M1692,1802 H2668" stroke="#666668" stroke-width="2" fill="none"/><text x="1687" y="1809" text-anchor="end" class="tk">0</text><path d="M1692,1648.62 H1704" stroke="#666668" stroke-width="2"/><text x="1687" y="1655.62" text-anchor="end" class="tk">2</text><path d="M1692,1495.25 H1704" stroke="#666668" stroke-width="2"/><text x="1687" y="1502.25" text-anchor="end" class="tk">4</text><path d="M1692,1341.88 H1704" stroke="#666668" stroke-width="2"/><text x="1687" y="1348.88" text-anchor="end" class="tk">6</text><path d="M1692,1188.5 H1704" stroke="#666668" stroke-width="2"/><text x="1687" y="1202" text-anchor="end" class="tk">8</text><path d="M2125.8,1802 V1814" stroke="#666668" stroke-width="2"/><path d="M2647.9,1802 V1814" stroke="#666668" stroke-width="2"/><text x="1614" y="1833.5" class="tk">Nov 11 12:00:00 AM</text><text x="2125.8" y="1833.5" text-anchor="middle" class="tk">10:30:00 AM</text><text x="2678" y="1833.5" text-anchor="end" class="tk">11:30:00 PM</text><rect x="2117.8" y="1648.6" width="16" height="154.4" fill="#4abf92"/><rect x="2178.0" y="1341.9" width="16" height="461.1" fill="#4abf92"/><path d="M1624,1877 h24" stroke="#4bc394" stroke-width="2.5"/><text x="1657" y="1880.8" class="lg" fill="#4bc394" stroke="#4bc394">systemd</text></svg><div class="tg"><svg class="ic" style="left:32px;top:22px" width="28" height="28" viewBox="0 0 16 16" fill="#e1dedc" ><path fill-rule="evenodd" d="M0 0h1v15h15v1H0V0Zm14.817 3.113a.5.5 0 0 1 .07.704l-4.5 5.5a.5.5 0 0 1-.74.037L7.06 6.767l-3.656 5.027a.5.5 0 0 1-.808-.588l4-5.5a.5.5 0 0 1 .758-.06l2.609 2.61 4.15-5.073a.5.5 0 0 1 .704-.07Z"/></svg><svg class="ic" style="left:76px;top:22px" width="28" height="28" viewBox="0 0 16 16" fill="#74eec6" ><path d="M4 11H2v3h2v-3zm5-4H7v7h2V7zm5-5v12h-2V2h2zm-2-1a1 1 0 0 0-1 1v12a1 1 0 0 0 1 1h2a1 1 0 0 0 1-1V2a1 1 0 0 0-1-1h-2zM6 7a1 1 0 0 1 1-1h2a1 1 0 0 1 1 1v7a1 1 0 0 1-1 1H7a1 1 0 0 1-1-1V7zm-5 4a1 1 0 0 1 1-1h2a1 1 0 0 1 1 1v3a1 1 0 0 1-1 1H2a1 1 0 0 1-1-1v-3z"/></svg></div><div class="rh"></div></div>
<div class="card" style="left:2716px;top:1102px;width:1096px;height:820px"><div class="t" style="left:35.6px;top:22.3px;font:normal 26px/34px 'Liberation Mono', monospace;color:#d7d7dc;-webkit-text-stroke:.35px #d7d7dc;">Firewall blocks</div><svg class="cs" width="1116" height="820" viewBox="2716 1102 1116 820"><defs><linearGradient id="g6" x1="0" y1="0" x2="0" y2="1"><stop offset="0" stop-color="#4bc394" stop-opacity=".15"/><stop offset=".11" stop-color="#4bc394" stop-opacity="0"/></linearGradient></defs><path d="M2822,1187.5 V1814" stroke="#666668" stroke-width="2" fill="none"/><path d="M2810,1802 H3786" stroke="#666668" stroke-width="2" fill="none"/><text x="2805" y="1809" text-anchor="end" class="tk">0</text><path d="M2810,1648.62 H2822" stroke="#666668" stroke-width="2"/><text x="2805" y="1655.62" text-anchor="end" class="tk">30</text><path d="M2810,1495.25 H2822" stroke="#666668" stroke-width="2"/><text x="2805" y="1502.25" text-anchor="end" class="tk">60</text><path d="M2810,1341.88 H2822" stroke="#666668" stroke-width="2"/><text x="2805" y="1348.88" text-anchor="end" class="tk">90</text><path d="M2810,1188.5 H2822" stroke="#666668" stroke-width="2"/><text x="2805" y="1202" text-anchor="end" class="tk">120</text><path d="M3243.8,1802 V1814" stroke="#666668" stroke-width="2"/><path d="M3765.9,1802 V1814" stroke="#666668" stroke-width="2"/><text x="2732" y="1833.5" class="tk">Nov 11 12:00:00 AM</text><text x="3243.8" y="1833.5" text-anchor="middle" class="tk">10:30:00 AM</text><text x="3796" y="1833.5" text-anchor="end" class="tk">11:30:00 PM</text><path d="M2822.00,1802.00C2828.69,1561.71,2835.39,1321.42,2842.08,1321.42C2848.78,1321.42,2855.47,1377.66,2862.17,1398.11C2868.86,1418.56,2875.56,1444.12,2882.25,1444.12C2888.94,1444.12,2895.64,1309.50,2902.33,1285.64C2909.03,1261.78,2915.72,1249.85,2922.42,1249.85C2929.11,1249.85,2935.81,1321.42,2942.50,1321.42C2949.19,1321.42,2955.89,1229.40,2962.58,1229.40C2969.28,1229.40,2975.97,1258.37,2982.67,1280.53C2989.36,1302.68,2996.06,1362.33,3002.75,1362.33C3009.44,1362.33,3016.14,1362.33,3022.83,1362.33C3029.53,1362.33,3036.22,1362.33,3042.92,1362.33C3049.61,1362.33,3056.31,1249.85,3063.00,1249.85C3069.69,1249.85,3076.39,1249.85,3083.08,1249.85C3089.78,1249.85,3096.47,1382.78,3103.17,1382.78C3109.86,1382.78,3116.56,1362.33,3123.25,1362.33C3129.94,1362.33,3136.64,1802.00,3143.33,1802.00C3150.03,1802.00,3156.72,1321.42,3163.42,1321.42C3170.11,1321.42,3176.81,1433.90,3183.50,1433.90C3190.19,1433.90,3196.89,1411.75,3203.58,1393.00C3210.28,1374.25,3216.97,1321.42,3223.67,1321.42C3230.36,1321.42,3237.06,1413.45,3243.75,1413.45C3250.44,1413.45,3257.14,1352.10,3263.83,1352.10C3270.53,1352.10,3277.22,1352.10,3283.92,1352.10C3290.61,1352.10,3297.31,1802.00,3304.00,1802.00C3310.69,1802.00,3317.39,1525.92,3324.08,1525.92C3330.78,1525.92,3337.47,1525.92,3344.17,1525.92C3350.86,1525.92,3357.56,1485.03,3364.25,1485.03C3370.94,1485.03,3377.64,1525.92,3384.33,1525.92C3391.03,1525.92,3397.72,1515.70,3404.42,1515.70C3411.11,1515.70,3417.81,1566.83,3424.50,1566.83C3431.19,1566.83,3437.89,1566.83,3444.58,1566.83C3451.28,1566.83,3457.97,1495.25,3464.67,1495.25C3471.36,1495.25,3478.06,1505.47,3484.75,1505.47C3491.44,1505.47,3498.14,1495.25,3504.83,1495.25C3511.53,1495.25,3518.22,1512.29,3524.92,1546.38C3531.61,1580.46,3538.31,1802.00,3545.00,1802.00C3551.69,1802.00,3558.39,1802.00,3565.08,1802.00C3571.78,1802.00,3578.47,1802.00,3585.17,1802.00C3591.86,1802.00,3598.56,1802.00,3605.25,1802.00C3611.94,1802.00,3618.64,1802.00,3625.33,1802.00C3632.03,1802.00,3638.72,1802.00,3645.42,1802.00C3652.11,1802.00,3658.81,1802.00,3665.50,1802.00C3672.19,1802.00,3678.89,1802.00,3685.58,1802.00C3692.28,1802.00,3698.97,1802.00,3705.67,1802.00C3712.36,1802.00,3719.06,1802.00,3725.75,1802.00C3732.44,1802.00,3739.14,1802.00,3745.83,1802.00C3752.53,1802.00,3759.22,1802.00,3765.92,1802.00L3765.92,1802L2822.00,1802Z" fill="url(#g6)" stroke="none"/><path d="M2822.00,1802.00C2828.69,1561.71,2835.39,1321.42,2842.08,1321.42C2848.78,1321.42,2855.47,1377.66,2862.17,1398.11C2868.86,1418.56,2875.56,1444.12,2882.25,1444.12C2888.94,1444.12,2895.64,1309.50,2902.33,1285.64C2909.03,1261.78,2915.72,1249.85,2922.42,1249.85C2929.11,1249.85,2935.81,1321.42,2942.50,1321.42C2949.19,1321.42,2955.89,1229.40,2962.58,1229.40C2969.28,1229.40,2975.97,1258.37,2982.67,1280.53C2989.36,1302.68,2996.06,1362.33,3002.75,1362.33C3009.44,1362.33,3016.14,1362.33,3022.83,1362.33C3029.53,1362.33,3036.22,1362.33,3042.92,1362.33C3049.61,1362.33,3056.31,1249.85,3063.00,1249.85C3069.69,1249.85,3076.39,1249.85,3083.08,1249.85C3089.78,1249.85,3096.47,1382.78,3103.17,1382.78C3109.86,1382.78,3116.56,1362.33,3123.25,1362.33C3129.94,1362.33,3136.64,1802.00,3143.33,1802.00C3150.03,1802.00,3156.72,1321.42,3163.42,1321.42C3170.11,1321.42,3176.81,1433.90,3183.50,1433.90C3190.19,1433.90,3196.89,1411.75,3203.58,1393.00C3210.28,1374.25,3216.97,1321.42,3223.67,1321.42C3230.36,1321.42,3237.06,1413.45,3243.75,1413.45C3250.44,1413.45,3257.14,1352.10,3263.83,1352.10C3270.53,1352.10,3277.22,1352.10,3283.92,1352.10C3290.61,1352.10,3297.31,1802.00,3304.00,1802.00C3310.69,1802.00,3317.39,1525.92,3324.08,1525.92C3330.78,1525.92,3337.47,1525.92,3344.17,1525.92C3350.86,1525.92,3357.56,1485.03,3364.25,1485.03C3370.94,1485.03,3377.64,1525.92,3384.33,1525.92C3391.03,1525.92,3397.72,1515.70,3404.42,1515.70C3411.11,1515.70,3417.81,1566.83,3424.50,1566.83C3431.19,1566.83,3437.89,1566.83,3444.58,1566.83C3451.28,1566.83,3457.97,1495.25,3464.67,1495.25C3471.36,1495.25,3478.06,1505.47,3484.75,1505.47C3491.44,1505.47,3498.14,1495.25,3504.83,1495.25C3511.53,1495.25,3518.22,1512.29,3524.92,1546.38C3531.61,1580.46,3538.31,1802.00,3545.00,1802.00C3551.69,1802.00,3558.39,1802.00,3565.08,1802.00C3571.78,1802.00,3578.47,1802.00,3585.17,1802.00C3591.86,1802.00,3598.56,1802.00,3605.25,1802.00C3611.94,1802.00,3618.64,1802.00,3625.33,1802.00C3632.03,1802.00,3638.72,1802.00,3645.42,1802.00C3652.11,1802.00,3658.81,1802.00,3665.50,1802.00C3672.19,1802.00,3678.89,1802.00,3685.58,1802.00C3692.28,1802.00,3698.97,1802.00,3705.67,1802.00C3712.36,1802.00,3719.06,1802.00,3725.75,1802.00C3732.44,1802.00,3739.14,1802.00,3745.83,1802.00C3752.53,1802.00,3759.22,1802.00,3765.92,1802.00" fill="none" stroke="#4bc394" stroke-width="2"/><path d="M2822.00,1802.00C2828.69,1802.00,2835.39,1802.00,2842.08,1802.00C2848.78,1802.00,2855.47,1802.00,2862.17,1802.00C2868.86,1802.00,2875.56,1802.00,2882.25,1802.00C2888.94,1802.00,2895.64,1802.00,2902.33,1802.00C2909.03,1802.00,2915.72,1802.00,2922.42,1802.00C2929.11,1802.00,2935.81,1802.00,2942.50,1802.00C2949.19,1802.00,2955.89,1802.00,2962.58,1802.00C2969.28,1802.00,2975.97,1802.00,2982.67,1802.00C2989.36,1802.00,2996.06,1802.00,3002.75,1802.00C3009.44,1802.00,3016.14,1802.00,3022.83,1802.00C3029.53,1802.00,3036.22,1802.00,3042.92,1802.00C3049.61,1802.00,3056.31,1802.00,3063.00,1802.00C3069.69,1802.00,3076.39,1802.00,3083.08,1802.00C3089.78,1802.00,3096.47,1802.00,3103.17,1802.00C3109.86,1802.00,3116.56,1802.00,3123.25,1802.00C3129.94,1802.00,3136.64,1792.80,3143.33,1792.80C3150.03,1792.80,3156.72,1802.00,3163.42,1802.00C3170.11,1802.00,3176.81,1802.00,3183.50,1802.00C3190.19,1802.00,3196.89,1802.00,3203.58,1802.00C3210.28,1802.00,3216.97,1802.00,3223.67,1802.00C3230.36,1802.00,3237.06,1802.00,3243.75,1802.00C3250.44,1802.00,3257.14,1802.00,3263.83,1802.00C3270.53,1802.00,3277.22,1802.00,3283.92,1802.00C3290.61,1802.00,3297.31,1802.00,3304.00,1802.00C3310.69,1802.00,3317.39,1802.00,3324.08,1802.00C3330.78,1802.00,3337.47,1802.00,3344.17,1802.00C3350.86,1802.00,3357.56,1802.00,3364.25,1802.00C3370.94,1802.00,3377.64,1802.00,3384.33,1802.00C3391.03,1802.00,3397.72,1802.00,3404.42,1802.00C3411.11,1802.00,3417.81,1802.00,3424.50,1802.00C3431.19,1802.00,3437.89,1802.00,3444.58,1802.00C3451.28,1802.00,3457.97,1802.00,3464.67,1802.00C3471.36,1802.00,3478.06,1802.00,3484.75,1802.00C3491.44,1802.00,3498.14,1802.00,3504.83,1802.00C3511.53,1802.00,3518.22,1802.00,3524.92,1802.00C3531.61,1802.00,3538.31,1802.00,3545.00,1802.00C3551.69,1802.00,3558.39,1802.00,3565.08,1802.00C3571.78,1802.00,3578.47,1802.00,3585.17,1802.00C3591.86,1802.00,3598.56,1802.00,3605.25,1802.00C3611.94,1802.00,3618.64,1802.00,3625.33,1802.00C3632.03,1802.00,3638.72,1802.00,3645.42,1802.00C3652.11,1802.00,3658.81,1802.00,3665.50,1802.00C3672.19,1802.00,3678.89,1802.00,3685.58,1802.00C3692.28,1802.00,3698.97,1802.00,3705.67,1802.00C3712.36,1802.00,3719.06,1802.00,3725.75,1802.00C3732.44,1802.00,3739.14,1802.00,3745.83,1802.00C3752.53,1802.00,3759.22,1802.00,3765.92,1802.00" fill="none" stroke="#7350d2" stroke-width="2"/><path d="M2742,1877 h24" stroke="#4bc394" stroke-width="2.5"/><text x="2775" y="1880.8" class="lg" fill="#4bc394" stroke="#4bc394">Allowed</text><path d="M2882.2,1877 h24" stroke="#7350d2" stroke-width="2.5"/><text x="2915.2" y="1880.8" class="lg" fill="#7350d2" stroke="#7350d2">Blocked</text></svg><div class="tg"><svg class="ic" style="left:32px;top:22px" width="28" height="28" viewBox="0 0 16 16" fill="#74eec6" ><path fill-rule="evenodd" d="M0 0h1v15h15v1H0V0Zm14.817 3.113a.5.5 0 0 1 .07.704l-4.5 5.5a.5.5 0 0 1-.74.037L7.06 6.767l-3.656 5.027a.5.5 0 0 1-.808-.588l4-5.5a.5.5 0 0 1 .758-.06l2.609 2.61 4.15-5.073a.5.5 0 0 1 .704-.07Z"/></svg><svg class="ic" style="left:76px;top:22px" width="28" height="28" viewBox="0 0 16 16" fill="#e1dedc" ><path d="M4 11H2v3h2v-3zm5-4H7v7h2V7zm5-5v12h-2V2h2zm-2-1a1 1 0 0 0-1 1v12a1 1 0 0 0 1 1h2a1 1 0 0 0 1-1V2a1 1 0 0 0-1-1h-2zM6 7a1 1 0 0 1 1-1h2a1 1 0 0 1 1 1v7a1 1 0 0 1-1 1H7a1 1 0 0 1-1-1V7zm-5 4a1 1 0 0 1 1-1h2a1 1 0 0 1 1 1v3a1 1 0 0 1-1 1H2a1 1 0 0 1-1-1v-3z"/></svg></div><div class="rh"></div></div>
<div class="sb">
<svg class="ic" style="left:29px;top:49px" width="26" height="30" viewBox="0 0 26 30"><path d="M13 .8 L24.800 7.600 V22.400 L13 29.200 L1.200 22.400 V7.600 Z" fill="#5ce377" stroke="#5ce377" stroke-width=".6" stroke-linejoin="round"/><path d="M14.800 6.500 L8 16.200 H12.300 L11 23.500 L18 13.600 H13.600 Z" fill="#111215"/></svg>
<div class="t" style="left:72px;top:46.9px;font:bold 30px/39px 'Liberation Mono', monospace;color:#fff;">HyperDX</div>
<svg class="ic" style="left:384px;top:51px" width="30" height="26" viewBox="0 0 30 26" fill="none" stroke="#858893" stroke-width="2"><rect x="1" y="1" width="28" height="24" rx="3.500"/><path d="M8.500 1 V25"/></svg>
<svg class="ic" style="left:28px;top:164px" width="28" height="28" viewBox="0 0 16 16" fill="#a8aec0" ><path d="M12.5 3a.5.5 0 0 1 0 1h-5a.5.5 0 0 1 0-1h5zm0 3a.5.5 0 0 1 0 1h-5a.5.5 0 0 1 0-1h5zm.5 3.5a.5.5 0 0 0-.5-.5h-5a.5.5 0 0 0 0 1h5a.5.5 0 0 0 .5-.5zm-.5 2.500a.5.5 0 0 1 0 1h-5a.5.5 0 0 1 0-1h5z"/><path d="M16 2a2 2 0 0 0-2-2H2a2 2 0 0 0-2 2v12a2 2 0 0 0 2 2h12a2 2 0 0 0 2-2V2zM4 1v14H2a1 1 0 0 1-1-1V2a1 1 0 0 1 1-1h2zm1 0h9a1 1 0 0 1 1 1v12a1 1 0 0 1-1 1H5V1z"/></svg>
<div class="t" style="left:83px;top:159.7px;font:normal 28.5px/37px 'Liberation Sans', sans-serif;color:#dcdce0;letter-spacing:0.64px;">Search</div>
<svg class="ic" style="left:390px;top:166px" width="24" height="24" viewBox="0 0 16 16" fill="#e1e1e6" ><path fill-rule="evenodd" d="M7.646 4.646a.5.5 0 0 1 .708 0l6 6a.5.5 0 0 1-.708.708L8 5.707l-5.646 5.647a.5.5 0 0 1-.708-.708l6-6z"/></svg>
<div class="hr" style="top:212px"></div>
<div class="pill" style="top:238px"><svg class="ic" style="left:20px;top:15px" width="23" height="23" viewBox="0 0 16 16" fill="#8aa0b8" ><path d="M11.742 10.344a6.500 6.500 0 1 0-1.397 1.398h-.001c.03.04.062.078.098.115l3.850 3.850a1 1 0 0 0 1.415-1.414l-3.850-3.850a1.007 1.007 0 0 0-.115-.100zM12 6.500a5.500 5.500 0 1 1-11 0 5.500 5.500 0 0 1 11 0z"/></svg><div class="t" style="left:57px;top:12.6px;font:normal 24px/31px 'Liberation Mono', monospace;color:#555864;-webkit-text-stroke:.35px #555864;">Saved Searches</div><div class="kbd">⌘K</div></div>
<div class="t" style="left:60px;top:321.0px;font:normal 24px/31px 'Liberation Sans', sans-serif;color:#8c99b4;letter-spacing:1.32px;">No saved searches</div>
<svg class="ic" style="left:28px;top:389px" width="28" height="28" viewBox="0 0 16 16" fill="#a8aec0" ><path fill-rule="evenodd" d="M0 0h1v15h15v1H0V0Zm14.817 3.113a.5.5 0 0 1 .07.704l-4.5 5.5a.5.5 0 0 1-.74.037L7.06 6.767l-3.656 5.027a.5.5 0 0 1-.808-.588l4-5.5a.5.5 0 0 1 .758-.06l2.609 2.61 4.15-5.073a.5.5 0 0 1 .704-.07Z"/></svg>
<div class="t" style="left:83px;top:384.6px;font:normal 28.5px/37px 'Liberation Sans', sans-serif;color:#dcdce0;letter-spacing:1.21px;">Chart Explorer</div>
<svg class="ic" style="left:28px;top:455px" width="28" height="28" viewBox="0 0 16 16" fill="#a8aec0" ><path d="M8 16a2 2 0 0 0 2-2H6a2 2 0 0 0 2 2zM8 1.918l-.797.161A4.002 4.002 0 0 0 4 6c0 .628-.134 2.197-.459 3.742-.16.767-.376 1.566-.663 2.258h10.244c-.287-.692-.502-1.49-.663-2.258C12.134 8.197 12 6.628 12 6a4.002 4.002 0 0 0-3.203-3.92L8 1.917zM14.22 12c.223.447.481.801.78 1H1c.299-.199.557-.553.78-1C2.68 10.2 3 6.88 3 6c0-2.42 1.72-4.44 4.005-4.901a1 1 0 1 1 1.99 0A5.002 5.002 0 0 1 13 6c0 .88.32 4.2 1.22 6z"/></svg>
<div class="t" style="left:83px;top:451.1px;font:normal 28.5px/37px 'Liberation Sans', sans-serif;color:#dcdce0;letter-spacing:1.1px;">Alerts</div>
<svg class="ic" style="left:28px;top:521px" width="28" height="28" viewBox="0 0 16 16" fill="#a8aec0" ><path d="M13.5 3a.5.5 0 0 1 .5.5V11H2V3.5a.5.5 0 0 1 .5-.5h11zm-11-1A1.5 1.5 0 0 0 1 3.5V12h14V3.5A1.5 1.5 0 0 0 13.5 2h-11zM0 12.5h16a1.5 1.5 0 0 1-1.5 1.5h-13A1.5 1.5 0 0 1 0 12.5z"/></svg>
<div class="t" style="left:83px;top:516.8px;font:normal 28.5px/37px 'Liberation Sans', sans-serif;color:#dcdce0;letter-spacing:1.09px;">Client Sessions</div>
<svg class="ic" style="left:28px;top:588px" width="28" height="28" viewBox="0 0 16 16" fill="#a8aec0" ><path d="M6 1H1v14h5V1zm9 0h-5v5h5V1zm0 9v5h-5v-5h5zM0 1a1 1 0 0 1 1-1h5a1 1 0 0 1 1 1v14a1 1 0 0 1-1 1H1a1 1 0 0 1-1-1V1zm9 0a1 1 0 0 1 1-1h5a1 1 0 0 1 1 1v5a1 1 0 0 1-1 1h-5a1 1 0 0 1-1-1V1zm1 8a1 1 0 0 0-1 1v5a1 1 0 0 0 1 1h5a1 1 0 0 0 1-1v-5a1 1 0 0 0-1-1h-5z"/></svg>
<div class="t" style="left:83px;top:583.9px;font:bold 28.5px/37px 'Liberation Sans', sans-serif;color:#7ef0c8;letter-spacing:1px;">Dashboards</div>
<svg class="ic" style="left:390px;top:590px" width="24" height="24" viewBox="0 0 16 16" fill="#e1e1e6" ><path fill-rule="evenodd" d="M7.646 4.646a.5.5 0 0 1 .708 0l6 6a.5.5 0 0 1-.708.708L8 5.707l-5.646 5.647a.5.5 0 0 1-.708-.708l6-6z"/></svg>
<div class="hr" style="top:636px"></div>
<div class="t" style="left:54px;top:664.6px;font:normal 26px/34px 'Liberation Sans', sans-serif;color:#e1e1e6;">+</div>
<div class="t" style="left:85.7px;top:664.6px;font:normal 26px/34px 'Liberation Sans', sans-serif;color:#e1e1e6;letter-spacing:-0.12px;">Create Dashboard</div>
<div class="pill" style="top:734px"><svg class="ic" style="left:20px;top:15px" width="23" height="23" viewBox="0 0 16 16" fill="#8aa0b8" ><path d="M11.742 10.344a6.500 6.500 0 1 0-1.397 1.398h-.001c.03.04.062.078.098.115l3.850 3.850a1 1 0 0 0 1.415-1.414l-3.850-3.850a1.007 1.007 0 0 0-.115-.100zM12 6.500a5.500 5.500 0 1 1-11 0 5.500 5.500 0 0 1 11 0z"/></svg><div class="t" style="left:57px;top:12.6px;font:normal 24px/31px 'Liberation Mono', monospace;color:#555864;-webkit-text-stroke:.35px #555864;">Saved Dashboards</div><div class="kbd">⌘K</div></div>
<svg class="ic" style="left:61px;top:819px" width="20" height="20" viewBox="0 0 16 16" fill="#8c95aa" ><path fill-rule="evenodd" d="M1.646 4.646a.5.5 0 0 1 .708 0L8 10.293l5.646-5.647a.5.5 0 0 1 .708.708l-6 6a.5.5 0 0 1-.708 0l-6-6a.5.5 0 0 1 0-.708z"/></svg>
<div class="t" style="left:96px;top:816.4px;font:normal 21.5px/28px 'Liberation Sans', sans-serif;color:#7d87a0;letter-spacing:1.88px;">SAVED DASHBOARDS</div>
<div class="t" style="left:60.4px;top:862.1px;font:bold 26px/34px 'Liberation Sans', sans-serif;color:#7ef0c8;letter-spacing:0.79px;">Host Logs</div>
<svg class="ic" style="left:61px;top:927px" width="20" height="20" viewBox="0 0 16 16" fill="#8c95aa" ><path fill-rule="evenodd" d="M1.646 4.646a.5.5 0 0 1 .708 0L8 10.293l5.646-5.647a.5.5 0 0 1 .708.708l-6 6a.5.5 0 0 1-.708 0l-6-6a.5.5 0 0 1 0-.708z"/></svg>
<div class="t" style="left:96px;top:924.5px;font:normal 21.5px/28px 'Liberation Sans', sans-serif;color:#7d87a0;letter-spacing:1.5px;">PRESETS</div>
<div class="t" style="left:60.4px;top:970.2px;font:normal 26px/34px 'Liberation Sans', sans-serif;color:#d7d7dc;letter-spacing:1.53px;">ClickHouse</div>
<div class="t" style="left:60.4px;top:1016.7px;font:normal 26px/34px 'Liberation Sans', sans-serif;color:#d7d7dc;letter-spacing:1.24px;">Services</div>
<div class="t" style="left:60.4px;top:1063.7px;font:normal 26px/34px 'Liberation Sans', sans-serif;color:#d7d7dc;letter-spacing:1.41px;">Kubernetes</div>
<svg class="ic" style="left:28px;top:1167px" width="28" height="28" viewBox="0 0 16 16" fill="#a8aec0" ><path d="M8 4.754a3.246 3.246 0 1 0 0 6.492 3.246 3.246 0 0 0 0-6.492zM5.754 8a2.246 2.246 0 1 1 4.492 0 2.246 2.246 0 0 1-4.492 0z"/><path d="M9.796 1.343c-.527-1.79-3.065-1.79-3.592 0l-.094.319a.873.873 0 0 1-1.255.52l-.292-.16c-1.64-.892-3.433.902-2.54 2.541l.159.292a.873.873 0 0 1-.52 1.255l-.319.094c-1.79.527-1.79 3.065 0 3.592l.319.094a.873.873 0 0 1 .52 1.255l-.16.292c-.892 1.64.901 3.434 2.541 2.54l.292-.159a.873.873 0 0 1 1.255.52l.094.319c.527 1.79 3.065 1.79 3.592 0l.094-.319a.873.873 0 0 1 1.255-.52l.292.16c1.64.893 3.434-.902 2.54-2.541l-.159-.292a.873.873 0 0 1 .52-1.255l.319-.094c1.79-.527 1.79-3.065 0-3.592l-.319-.094a.873.873 0 0 1-.52-1.255l.16-.292c.893-1.64-.902-3.433-2.541-2.54l-.292.159a.873.873 0 0 1-1.255-.52l-.094-.319zm-2.633.283c.246-.835 1.428-.835 1.674 0l.094.319a1.873 1.873 0 0 0 2.693 1.115l.291-.16c.764-.415 1.6.42 1.184 1.185l-.159.292a1.873 1.873 0 0 0 1.116 2.692l.318.094c.835.246.835 1.428 0 1.674l-.319.094a1.873 1.873 0 0 0-1.115 2.693l.16.291c.415.764-.42 1.6-1.185 1.184l-.291-.159a1.873 1.873 0 0 0-2.693 1.116l-.094.318c-.246.835-1.428.835-1.674 0l-.094-.319a1.873 1.873 0 0 0-2.692-1.115l-.292.16c-.764.415-1.6-.42-1.184-1.185l.159-.291A1.873 1.873 0 0 0 1.945 8.93l-.319-.094c-.835-.246-.835-1.428 0-1.674l.319-.094A1.873 1.873 0 0 0 3.06 4.377l-.16-.292c-.415-.764.42-1.6 1.185-1.184l.292.159a1.873 1.873 0 0 0 2.692-1.115l.094-.319z"/></svg>
<div class="t" style="left:82px;top:1162.7px;font:normal 28.5px/37px 'Liberation Sans', sans-serif;color:#dcdce0;letter-spacing:1.17px;">Team Settings</div>
<div style="position:absolute;left:28px;top:1262px;width:396px;height:700px;border:2px solid #292b31;border-radius:17px"></div>
<div class="t" style="left:50.3px;top:1289.0px;font:bold 26px/34px 'Liberation Sans', sans-serif;color:#adabb5;letter-spacing:1.53px;">Get Started</div>
<div style="position:absolute;left:227px;top:1290px;width:57px;height:32px;border-radius:16px;background:#193730;color:#6eebb4;font:bold 19px/32px 'Liberation Sans', sans-serif;text-align:center;letter-spacing:.5px">3/3</div>
<svg class="ic" style="left:369px;top:1295px" width="22" height="22" viewBox="0 0 16 16" fill="#8c96af" ><path fill-rule="evenodd" d="M7.646 4.646a.5.5 0 0 1 .708 0l6 6a.5.5 0 0 1-.708.708L8 5.707l-5.646 5.647a.5.5 0 0 1-.708-.708l6-6z"/></svg>
<svg class="ic" style="left:50px;top:1399px" width="40" height="40" viewBox="0 0 40 40" fill="none" stroke="#58e6a5" stroke-linecap="round" stroke-linejoin="round"><circle cx="20" cy="20" r="19" stroke-width="2"/><path d="M15.300 20.600 L18.700 24 L25 16.700" stroke-width="2.300"/></svg><div class="t" style="left:114.4px;top:1351.6px;font:bold 24.5px/32px 'Liberation Sans', sans-serif;color:#6c6b76;letter-spacing:1.99px;text-decoration:line-through;">Connect to</div><div class="t" style="left:114.4px;top:1389.6px;font:bold 24.5px/32px 'Liberation Sans', sans-serif;color:#6c6b76;letter-spacing:1.9px;text-decoration:line-through;">ClickHouse</div><div class="t" style="left:114.4px;top:1424.8px;font:normal 23.5px/31px 'Liberation Sans', sans-serif;color:#84838f;letter-spacing:1.74px;">Set up your database</div><div class="t" style="left:114.4px;top:1459.2px;font:normal 23.5px/31px 'Liberation Sans', sans-serif;color:#84838f;letter-spacing:1.7px;">connection</div>
<svg class="ic" style="left:50px;top:1544px" width="40" height="40" viewBox="0 0 40 40" fill="none" stroke="#58e6a5" stroke-linecap="round" stroke-linejoin="round"><circle cx="20" cy="20" r="19" stroke-width="2"/><path d="M15.300 20.600 L18.700 24 L25 16.700" stroke-width="2.300"/></svg><div class="t" style="left:114.4px;top:1514.8px;font:bold 24.5px/32px 'Liberation Sans', sans-serif;color:#6c6b76;letter-spacing:1.92px;text-decoration:line-through;">Create Data Sources</div><div class="t" style="left:114.4px;top:1550.4px;font:normal 23.5px/31px 'Liberation Sans', sans-serif;color:#84838f;letter-spacing:1.67px;">Configure where your</div><div class="t" style="left:114.4px;top:1584.4px;font:normal 23.5px/31px 'Liberation Sans', sans-serif;color:#84838f;letter-spacing:1.7px;">data comes from</div>
<svg class="ic" style="left:50px;top:1669px" width="40" height="40" viewBox="0 0 40 40" fill="none" stroke="#58e6a5" stroke-linecap="round" stroke-linejoin="round"><circle cx="20" cy="20" r="19" stroke-width="2"/><path d="M15.300 20.600 L18.700 24 L25 16.700" stroke-width="2.300"/></svg><div class="t" style="left:114.4px;top:1639.6px;font:bold 24.5px/32px 'Liberation Sans', sans-serif;color:#6c6b76;letter-spacing:2.15px;text-decoration:line-through;">Add Data</div><div class="t" style="left:114.4px;top:1675.3px;font:normal 23.5px/31px 'Liberation Sans', sans-serif;color:#84838f;letter-spacing:1.71px;">Start sending logs,</div><div class="t" style="left:114.4px;top:1709.2px;font:normal 23.5px/31px 'Liberation Sans', sans-serif;color:#84838f;letter-spacing:1.79px;">metrics, or traces</div>
<div style="position:absolute;left:20px;top:1724px;width:56px;height:56px;border-radius:28px;background:#474959;border:2px solid #32343e;color:#dcdce6;font:bold 31px/52px 'Liberation Sans', sans-serif;text-align:center">?</div>
<div style="position:absolute;left:20px;top:1796px;width:412px;height:74px;border-radius:14px;background:#46485a"></div>
<div style="position:absolute;left:36px;top:1807px;width:52px;height:52px;border-radius:26px;background:#446464;color:#6eebb4;font:bold 22px/52px 'Liberation Sans', sans-serif;text-align:center">D</div>
<div class="t" style="left:108px;top:1802.4px;font:bold 24px/31px 'Liberation Sans', sans-serif;color:#fff;letter-spacing:1.18px;">dominic.tran@clic...</div>
<div class="t" style="left:108px;top:1830.7px;font:normal 22px/29px 'Liberation Sans', sans-serif;color:#fff;letter-spacing:1.43px;">dominic.tran@clickho...</div>
<svg class="ic" style="left:392px;top:1823px" width="20" height="20" viewBox="0 0 16 16" fill="#8287a0" ><path fill-rule="evenodd" d="M4.646 1.646a.5.5 0 0 1 .708 0l6 6a.5.5 0 0 1 0 .708l-6 6a.5.5 0 0 1-.708-.708L10.293 8 4.646 2.354a.5.5 0 0 1 0-.708z"/></svg>
</div>
<div style="position:absolute;left:3806px;top:0;width:2px;height:1908px;background:#3c3c3e"></div><div style="position:absolute;left:0;top:1906px;width:3808px;height:2px;background:#3c3c3e"></div>
</div></body></html>
